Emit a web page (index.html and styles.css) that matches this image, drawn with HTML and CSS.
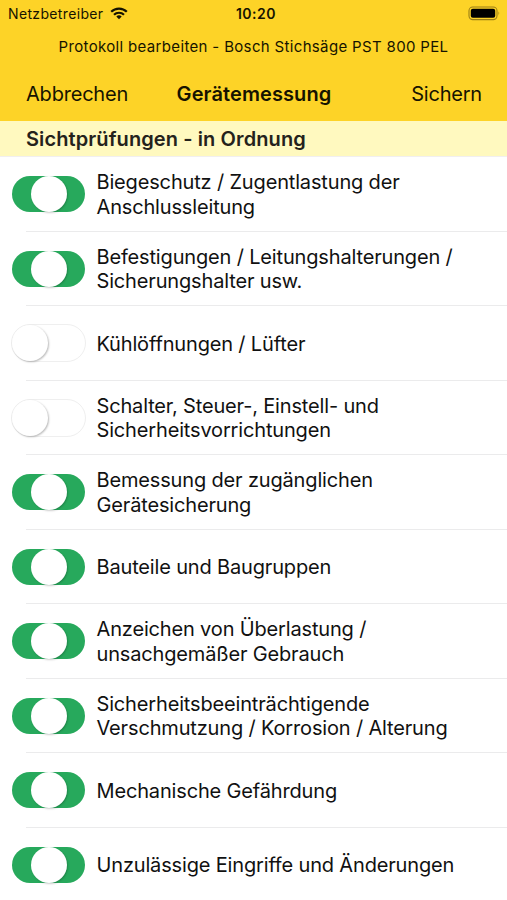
FILE: index.html
```html
<!DOCTYPE html>
<html lang="de">
<head>
<meta charset="utf-8">
<title>Gerätemessung</title>
<link rel="stylesheet" href="styles.css">
</head>
<body>
<header class="top">
  <div class="status">
    <div class="carrier"><span>Netzbetreiber</span>
      <svg class="wifi" viewBox="0 0 18 13" width="18" height="13" fill="none" stroke="#161300" stroke-width="2.2"><path d="M1.2 4.8a11 11 0 0 1 15.6 0M4 7.8a7.1 7.1 0 0 1 10 0"/><path d="M9 12.2 6.3 9.6a3.9 3.9 0 0 1 5.4 0z" fill="#161300" stroke="none"/></svg>
    </div>
    <time class="clock">10:20</time>
    <svg class="battery" viewBox="0 0 33 15" width="33" height="15"><rect x="1" y="1" width="28" height="12.6" rx="3.8" fill="none" stroke="#9b7f16" stroke-width="1.1"/><rect x="2.8" y="2.8" width="24.4" height="9" rx="2" fill="#000"/><path d="M30.5 5.2q1.8 2 0 4.2z" fill="#9b7f16"/></svg>
  </div>
  <p class="prompt">Protokoll bearbeiten - Bosch Stichsäge PST 800 PEL</p>
  <nav class="nav"><span class="cancel">Abbrechen</span><h1>Gerätemessung</h1><span class="save">Sichern</span></nav>
</header>
<main>
  <h2><span>Sichtprüfungen - in Ordnung</span></h2>
  <ul class="checks">
    <li><i class="switch on"></i><p>Biegeschutz / Zugentlastung der<br>Anschlussleitung</p></li>
    <li><i class="switch on"></i><p>Befestigungen / Leitungshalterungen /<br>Sicherungshalter usw.</p></li>
    <li><i class="switch"></i><p>Kühlöffnungen / Lüfter</p></li>
    <li><i class="switch"></i><p>Schalter, Steuer-, Einstell- und<br>Sicherheitsvorrichtungen</p></li>
    <li><i class="switch on"></i><p>Bemessung der zugänglichen<br>Gerätesicherung</p></li>
    <li><i class="switch on"></i><p>Bauteile und Baugruppen</p></li>
    <li><i class="switch on"></i><p>Anzeichen von Überlastung /<br>unsachgemäßer Gebrauch</p></li>
    <li><i class="switch on"></i><p>Sicherheitsbeeinträchtigende<br>Verschmutzung / Korrosion / Alterung</p></li>
    <li><i class="switch on"></i><p>Mechanische Gefährdung</p></li>
    <li><i class="switch on"></i><p>Unzulässige Eingriffe und Änderungen</p></li>
  </ul>
</main>
</body>
</html>
```
FILE: styles.css
```css
* { box-sizing: border-box; margin: 0; padding: 0; }
body { width: 507px; height: 900px; overflow: hidden; background: #fff; color: #111; font-family: Inter, "Liberation Sans", sans-serif; }
.top { height: 121px; background: #fdd327; color: #161300; }
.status { height: 27px; display: grid; grid-template-columns: 1fr auto 1fr; align-items: center; padding: 0 5px 0 8px; }
.carrier { display: flex; align-items: center; gap: 7px; font-size: 14px; letter-spacing: .35px; }
.wifi { display: block; margin-top: -1px; }
.clock { font-size: 14px; font-weight: 600; letter-spacing: .5px; margin-left: 2px; }
.battery { justify-self: end; margin-right: 1px; }
.prompt { height: 40px; line-height: 40px; text-align: center; font-size: 15px; letter-spacing: .34px; white-space: nowrap; }
.nav { height: 54px; display: grid; grid-template-columns: 1fr auto 1fr; align-items: center; padding: 0 25px 0 26px; font-size: 20px; letter-spacing: -.2px; }
.nav h1 { font-size: 20px; font-weight: 600; letter-spacing: .1px; }
.save { justify-self: end; }
h2 { height: 36px; line-height: 36px; padding-left: 26px; background: #fff9bf; border-bottom: 1px solid #f1eff0; color: #24221b; font-size: 20px; font-weight: 600; letter-spacing: .1px; }
.checks { list-style: none; }
.checks li { height: 74.5px; display: flex; align-items: center; gap: 10.5px; padding-left: 11px; background: linear-gradient(#ebebec, #ebebec) 26px 100% / 481px 1px no-repeat; }
.checks li:last-child { background: none; }
.checks p { padding-top: 1px; font-size: 20px; line-height: 24.4px; letter-spacing: -.16px; white-space: nowrap; }
.switch { width: 75px; height: 38px; flex: none; display: flex; align-items: center; border: 1px solid #efefef; border-radius: 19px; background: #fff; }
.switch::before { content: ""; width: 36px; height: 36px; border-radius: 50%; background: #fff; box-shadow: 1px 1px 2px #0004; }
.switch.on { border-color: transparent; background: #27a95c; background-clip: padding-box; }
.switch.on::before { margin-left: 19px; box-shadow: 1px 1px 2px #0003; }
```
